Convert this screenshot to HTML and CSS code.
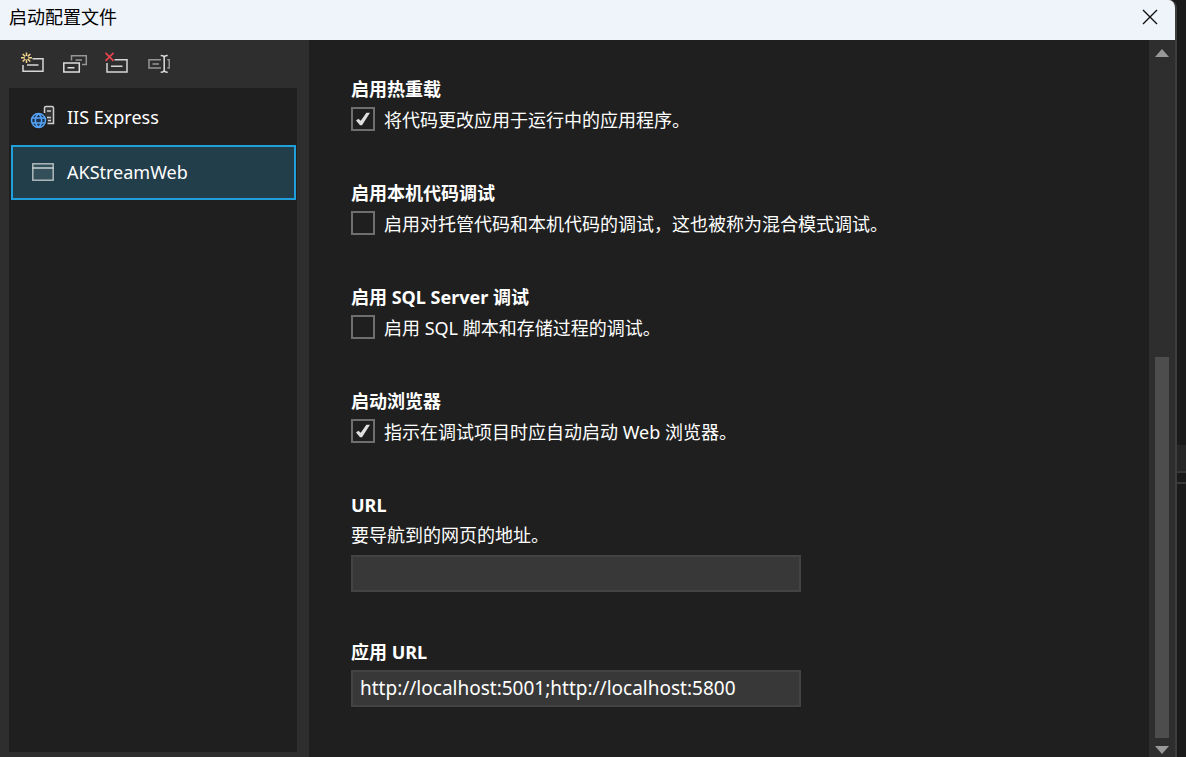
FILE: index.html
```html
<!DOCTYPE html>
<html lang="zh-CN">
<head>
<meta charset="utf-8">
<title>启动配置文件</title>
<link rel="stylesheet" href="styles.css">
</head>
<body>
<div class="screen">
  <main class="dialog">
    <header class="titlebar">
      <h1 class="title">启动配置文件</h1>
      <button class="close" aria-label="关闭">
        <svg width="16" height="16" viewBox="0 0 16 16"><path d="M1 1L15 15M15 1L1 15" fill="none" stroke="#111" stroke-width="1.4"/></svg>
      </button>
    </header>
    <div class="body">
      <aside class="sidebar">
        <div class="toolbar">
          <button class="tool" aria-label="新建配置文件">
            <svg width="24" height="24" viewBox="0 0 24 24" fill="none"><path d="M12.500 6.800H23V19.300H3V13M7 13H18.500" stroke="#d6d6d6" stroke-width="1.500"/><path d="M6.500 0.500V4M6.500 7.500V11M1 5.700H4.700M8.300 5.700H12M2.700 2L5.200 4.500M7.800 7L10.300 9.500M10.300 2L7.800 4.500M5.200 7L2.700 9.500" stroke="#f5d58c" stroke-width="1.500"/></svg>
          </button>
          <button class="tool" aria-label="复制配置文件">
            <svg width="24" height="24" viewBox="0 0 24 24" fill="none"><path d="M9.500 8.500V3.800H24.300V12.600H20M13.500 8H20" stroke="#969696" stroke-width="1.500"/><path d="M1.800 11H17.300V20H1.800ZM5.500 15.800H12.500" stroke="#dedede" stroke-width="1.500"/></svg>
          </button>
          <button class="tool" aria-label="删除配置文件">
            <svg width="24" height="24" viewBox="0 0 24 24" fill="none"><path d="M10.500 7.800H23V20H3V11M7 14.300H18.500" stroke="#d6d6d6" stroke-width="1.500"/><path d="M1.500 0.800L9.500 8.800M9.500 0.800L1.500 8.800" stroke="#e8434f" stroke-width="1.700"/></svg>
          </button>
          <button class="tool" aria-label="重命名配置文件">
            <svg width="24" height="24" viewBox="0 0 24 24" fill="none"><path d="M15 7.800H3V16H15M21.300 7.800H23.200V16H21.300M6.500 12H13" stroke="#969696" stroke-width="1.500"/><path d="M14.700 3.500C16.700 3.500 18.200 3.900 18.200 5.500V18.200C18.200 19.800 16.700 20.200 14.700 20.200M21.700 3.500C19.700 3.500 18.200 3.900 18.200 5.500M18.200 18.200C18.200 19.800 19.700 20.200 21.700 20.200" stroke="#e0e0e0" stroke-width="1.500"/></svg>
          </button>
        </div>
        <nav class="profiles">
          <button class="profile">
            <svg width="24" height="24" viewBox="0 0 24 24" fill="none"><path d="M13.500 8V3Q13.500 1.500 15 1.500H21Q22.500 1.500 22.500 3V18.500H16.500" fill="#343434" stroke="#cecece" stroke-width="1.500"/><path d="M16 6H20M16 12.500H20M17 15.500H20" stroke="#cecece" stroke-width="1.300"/><circle cx="7.500" cy="15.500" r="7" fill="#1e3452" stroke="#55a4f5" stroke-width="1.500"/><path d="M1 13H14M1 18H14M7.500 8.500C3.300 12 3.300 19 7.500 22.500M7.500 8.500C11.700 12 11.700 19 7.500 22.500" stroke="#55a4f5" stroke-width="1.500"/></svg>
            <span>IIS Express</span>
          </button>
          <button class="profile selected" aria-current="true">
            <svg width="24" height="24" viewBox="0 0 24 24" fill="none"><rect x="1.800" y="3.800" width="20.400" height="16.400" fill="#334f5a" stroke="#b8c0c3" stroke-width="1.400"/><path d="M1.500 8H22.500" stroke="#d5dadb" stroke-width="1.400"/></svg>
            <span>AKStreamWeb</span>
          </button>
        </nav>
      </aside>
      <form class="settings">
        <section class="setting">
          <h2 class="heading">启用热重载</h2>
          <label class="option"><input class="check" type="checkbox" checked><span class="option-text">将代码更改应用于运行中的应用程序。</span></label>
        </section>
        <section class="setting">
          <h2 class="heading">启用本机代码调试</h2>
          <label class="option"><input class="check" type="checkbox"><span class="option-text">启用对托管代码和本机代码的调试，这也被称为混合模式调试。</span></label>
        </section>
        <section class="setting">
          <h2 class="heading">启用 SQL Server 调试</h2>
          <label class="option"><input class="check" type="checkbox"><span class="option-text">启用 SQL 脚本和存储过程的调试。</span></label>
        </section>
        <section class="setting">
          <h2 class="heading">启动浏览器</h2>
          <label class="option"><input class="check" type="checkbox" checked><span class="option-text">指示在调试项目时应自动启动 Web 浏览器。</span></label>
        </section>
        <section class="setting field">
          <h2 class="heading">URL</h2>
          <label class="hint" for="url">要导航到的网页的地址。</label>
          <input class="textbox" id="url" type="text">
        </section>
        <section class="setting field">
          <h2 class="heading"><label for="app-url">应用 URL</label></h2>
          <input class="textbox" id="app-url" type="text" value="http://localhost:5001;http://localhost:5800">
        </section>
      </form>
      <div class="scrollbar">
        <button class="arrow up" type="button" aria-label="向上滚动"></button>
        <div class="track"><div class="thumb"></div></div>
        <button class="arrow down" type="button" aria-label="向下滚动"></button>
      </div>
    </div>
  </main>
  <div class="backdrop">
    <div class="backdrop-panel"></div>
    <div class="backdrop-line"></div>
  </div>
</div>
</body>
</html>
```

FILE: styles.css
```css
* {
  box-sizing: border-box;
}

body {
  margin: 0;
  background: #1a1a1a;
  color: #fff;
  font: 18px/24px "Noto Sans", "Noto Sans CJK SC", sans-serif;
}

button,
input {
  margin: 0;
  font: inherit;
  color: inherit;
}

button {
  padding: 0;
  border: 0;
  background: none;
}

svg {
  display: block;
  overflow: visible;
}

.screen {
  display: flex;
  height: 100vh;
  overflow: hidden;
}

.dialog {
  display: flex;
  flex: 1;
  flex-direction: column;
  min-width: 0;
  border-right: 2px solid #3d3d3d;
  border-top-right-radius: 8px;
  overflow: hidden;
}

.titlebar {
  display: flex;
  flex: none;
  align-items: center;
  justify-content: space-between;
  height: 40px;
  padding: 0 17px 6px 9px;
  background: #eff3fa;
  color: #000;
}

.title {
  margin: 0;
  font-size: 18px;
  font-weight: 400;
}

.body {
  display: flex;
  flex: 1;
  min-height: 0;
}

.sidebar {
  display: flex;
  flex: none;
  flex-direction: column;
  width: 309px;
  padding: 0 12px 5px 9px;
  background: #2e2e2e;
}

.toolbar {
  display: flex;
  flex: none;
  gap: 18px;
  align-items: center;
  height: 48px;
  padding-left: 11px;
}

.profiles {
  flex: 1;
  padding: 2px 1px 2px 2px;
  background: #1f1f1f;
}

.profile {
  display: flex;
  gap: 12px;
  align-items: center;
  width: 100%;
  height: 55px;
  padding: 0 18px 2px;
  border: 2px solid transparent;
  text-align: left;
}

.profile.selected {
  border-color: #219fdb;
  background: #233e4b;
}

.settings {
  flex: 1;
  min-width: 0;
  padding: 37px 42px 0;
  background: #1f1f1f;
  overflow: hidden;
}

.setting {
  margin-bottom: 50px;
}

.field {
  margin-bottom: 48px;
}

.heading {
  margin: 0 0 6px;
  font-size: 18px;
  font-weight: 700;
}

.option {
  display: flex;
  gap: 9px;
  align-items: center;
  height: 24px;
}

.option-text {
  padding-top: 2px;
}

.check {
  flex: none;
  width: 24px;
  height: 24px;
  border: 2px solid #6e6e6e;
  appearance: none;
}

.check:checked::before {
  display: block;
  width: 14px;
  height: 14px;
  margin: 3px;
  background: #dedede;
  clip-path: polygon(0 60%, 17% 48%, 34% 63%, 74% 6%, 100% 6%, 43% 94%, 29% 94%);
  content: "";
}

.hint {
  display: block;
  margin-bottom: 8px;
}

.textbox {
  display: block;
  width: 100%;
  max-width: 450px;
  height: 37px;
  padding: 0 7px 2px;
  border: 2px solid #434343;
  background: #383838;
  font-size: 19px;
}

.scrollbar {
  display: flex;
  flex: none;
  flex-direction: column;
  width: 26px;
  background: #2e2e2e;
}

.arrow {
  display: grid;
  flex: none;
  place-items: center;
  height: 26px;
}

.arrow.down {
  height: 14px;
}

.arrow::before {
  width: 14px;
  height: 8px;
  background: #999;
  content: "";
}

.up::before {
  clip-path: polygon(50% 0, 100% 100%, 0 100%);
}

.down::before {
  clip-path: polygon(0 0, 100% 0, 50% 100%);
}

.track {
  display: grid;
  flex: 1;
  grid-template-rows: 291fr 381fr;
  padding: 0 6px 5px;
}

.thumb {
  grid-row: 2;
  background: #4d4d4d;
}

.backdrop {
  flex: none;
  width: 9px;
  padding-top: 445px;
  background: #1a1a1a;
}

.backdrop-panel {
  height: 28px;
  border-bottom: 2px solid #383838;
  background: #262626;
}

.backdrop-line {
  height: 11px;
  border-bottom: 2px solid #383838;
}
```
